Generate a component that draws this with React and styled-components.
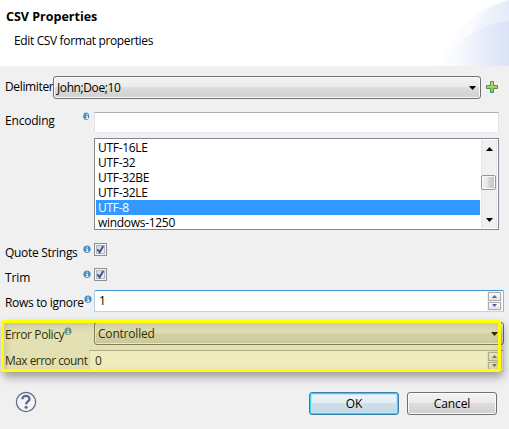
import React from "react";
import styled, { createGlobalStyle, css } from "styled-components";

const Global = createGlobalStyle`
  * { box-sizing: border-box; }
  body { margin: 0; background: #f0f0f0; overflow: hidden; }
`;

const Dialog = styled.main`
  position: relative;
  display: flex;
  flex-direction: column;
  width: 509px;
  height: 429px;
  overflow: hidden;
  background: #f0f0f0;
  color: #000;
  font: 12px/16px "Open Sans", "Noto Sans", sans-serif;
`;

const Header = styled.header`
  display: flex;
  justify-content: space-between;
  height: 66px;
  background: #fff;
`;
const Headings = styled.div`
  padding: 9px 0 0 6px;
`;
const Title = styled.h1`
  margin: 0;
  font-size: 12.5px;
  line-height: 16px;
  font-weight: 700;
  white-space: nowrap;
  letter-spacing: ${(p) => p.$ls || 0}px;
`;
const Subtitle = styled.p`
  margin: 8px 0 0 8px;
  white-space: nowrap;
  letter-spacing: ${(p) => p.$ls || 0}px;
`;
const Text = styled.span`
  display: block;
  white-space: nowrap;
  letter-spacing: ${(p) => p.$ls || 0}px;
`;

const Form = styled.form`
  display: flex;
  flex-direction: column;
`;
const Row = styled.div`
  display: flex;
  align-items: flex-start;
  height: ${(p) => p.$h}px;
  margin-top: ${(p) => p.$gap || 0}px;
  padding-left: 5px;
`;
const Label = styled.label`
  display: flex;
  flex: none;
  justify-content: ${(p) => (p.$tight ? "flex-start" : "space-between")};
  width: ${(p) => p.$w || 89}px;
  padding-right: ${(p) => (p.$tight ? 0 : 3)}px;
  padding-top: ${(p) => p.$top || 0}px;
`;
const InfoSvg = styled.svg`
  flex: none;
  display: block;
  width: 8px;
  height: 9px;
  margin-top: ${(p) => p.$top || 0}px;
`;

const Combo = styled.div`
  display: flex;
  align-items: center;
  justify-content: space-between;
  width: ${(p) => p.$w}px;
  height: 23px;
  padding: 0 ${(p) => p.$pr || 4}px 0 3px;
  border: 1px solid #707070;
  border-radius: 3px;
  box-shadow: inset 0 0 0 1px #fafafa;
  background: linear-gradient(#f2f2f2 0%, #ebebeb 48%, #dddddd 50%, #cfcfcf 100%);
`;
const AddButton = styled.button`
  display: flex;
  margin: 5px 0 0 5px;
  padding: 0;
  border: 0;
  background: none;
`;

const Field = styled.div`
  display: flex;
  justify-content: space-between;
  width: ${(p) => p.$w}px;
  height: ${(p) => p.$h || 22}px;
  padding-left: ${(p) => p.$pl || 4}px;
  line-height: 20px;
  background: #fff;
  border: 1px solid #e2e3ea;
  border-top-color: #abadb3;
  border-right-color: #dbdfe6;
  border-bottom-color: #e3e9ef;
  ${(p) =>
    p.$focus &&
    css`
      border-color: #3d94d0 #abadb3 #b7d9ed #b5cfe7;
      border-radius: 2px 0 0 0;
    `}
`;
const Spinner = styled.div`
  display: flex;
  flex-direction: column;
  gap: 1px;
  width: 16px;
  height: 20px;
  padding: 1px;
  background: #f0f0f0;
  border-right: 1px solid #fff;
`;
const SpinButton = styled.div`
  display: flex;
  flex: 1;
  align-items: center;
  justify-content: center;
  border: 1px solid #abadb3;
  background: linear-gradient(#fafafa, #e4e4e4);
`;

const ListBox = styled.div`
  display: flex;
  width: 405px;
  height: 92px;
  margin: 5px 0 0 94px;
  padding: 1px;
  overflow: hidden;
  border: 1px solid #828790;
  background: #fff;
`;
const Options = styled.div`
  flex: 1;
  height: 90px;
`;
const Option = styled.div`
  height: 15px;
  padding-left: 2px;
  line-height: 15px;
  color: ${(p) => (p.$selected ? "#fff" : "#000")};
  background: ${(p) => (p.$selected ? "#3399ff" : "transparent")};
`;
const ScrollTrack = styled.div`
  display: flex;
  flex-direction: column;
  align-items: center;
  width: 16px;
  height: 88px;
  margin: 0 0 0 1px;
  padding: 7px 0 6px;
  border-left: 1px solid #e3e7ec;
  border-right: 1px solid #e3e7ec;
  background: #f0f0f0;
`;
const Thumb = styled.div`
  width: 15px;
  height: 15px;
  margin: 24px 0 auto -1px;
  border: 1px solid #979797;
  border-radius: 2px;
  box-shadow: inset 0 0 0 1px #f8f8f8;
  background: linear-gradient(90deg, #f4f4f4 0%, #e6e6e6 48%, #d3d3d6 52%, #c4c4c8 100%);
`;

const Checkbox = styled.div`
  display: flex;
  width: 13px;
  height: 13px;
  border: 1px solid #8e8f8f;
  box-shadow: inset 0 0 0 1px #f4f4f4, inset 0 0 0 2px #b4b9c0;
  background: linear-gradient(135deg, #cbcfd5, #f6f6f6);
`;

const Highlight = styled.div`
  position: absolute;
  left: 1px;
  top: 320px;
  width: 500px;
  height: 52px;
  border: 3px solid #ffff00;
  border-radius: 3px;
  background: rgba(187, 180, 0, 0.25);
  box-shadow: 2px 5px 10px rgba(0, 0, 0, 0.36), inset 2px 3px 7px rgba(0, 0, 0, 0.13);
`;

const Footer = styled.footer`
  display: flex;
  margin-top: 19px;
  padding-left: 15px;
`;
const Buttons = styled.div`
  display: flex;
  gap: 8px;
  margin: 1px 0 0 272px;
`;
const Button = styled.button`
  width: 90px;
  height: 23px;
  padding: 0;
  border: 1px solid ${(p) => (p.$primary ? "#3c7fb1" : "#707070")};
  border-radius: 3px;
  color: #000;
  font: inherit;
  line-height: 20px;
  box-shadow: ${(p) =>
    p.$primary ? "inset 0 0 0 1px #38cdf6, inset 0 0 0 2px #b9e8f6" : "inset 0 0 0 1px #fafafa"};
  background: ${(p) =>
    p.$primary
      ? "linear-gradient(#f0f4f6 0%, #e4edf2 48%, #cedfe8 50%, #c3d7e2 100%)"
      : "linear-gradient(#f2f2f2 0%, #ebebeb 48%, #dddddd 50%, #cfcfcf 100%)"};
`;

const Info = ({ top, clipped }) => (
  <InfoSvg $top={top} viewBox="0 0 8 9">
    <ellipse cx={clipped ? 3.2 : 4} cy="4.3" rx={clipped ? 3 : 3.6} ry="3.8" fill="#4b8fc0" />
    <path d="M4 1.6v1.2M3 4h1.4v2.5M2.7 6.6h2.8" stroke="#fff" fill="none" strokeWidth="1" />
  </InfoSvg>
);

const Arrow = ({ up, w = 7, h = 4, color = "#000" }) => (
  <svg width={w} height={h} viewBox="0 0 8 4" preserveAspectRatio="none">
    <path d={up ? "M0 4L4 0L8 4Z" : "M0 0H8L4 4Z"} fill={color} />
  </svg>
);

const Spin = () => (
  <Spinner>
    <SpinButton><Arrow up w={5} h={3} color="#4c5f9e" /></SpinButton>
    <SpinButton><Arrow w={5} h={3} color="#4c5f9e" /></SpinButton>
  </Spinner>
);

const Check = () => (
  <Checkbox>
    <svg width="11" height="11" viewBox="0 0 11 11">
      <path d="M2.4 5.2L4.6 8.2L8.3 2" stroke="#3f4f9b" strokeWidth="1.9" fill="none" />
    </svg>
  </Checkbox>
);

const Swoosh = () => (
  <svg width="120" height="66" viewBox="0 0 120 66">
    <defs>
      <linearGradient id="outer" gradientUnits="userSpaceOnUse" x1="48" x2="120" y1="0" y2="0">
        <stop offset="0" stopColor="#fff" />
        <stop offset=".5" stopColor="#f8fafe" />
        <stop offset="1" stopColor="#e8eefa" />
      </linearGradient>
      <linearGradient id="middle" gradientUnits="userSpaceOnUse" x1="70" x2="120" y1="0" y2="0">
        <stop offset="0" stopColor="#fafbfe" />
        <stop offset="1" stopColor="#e5ebf9" />
      </linearGradient>
      <linearGradient id="inner" gradientUnits="userSpaceOnUse" x1="48" x2="120" y1="0" y2="0">
        <stop offset="0" stopColor="#fff" />
        <stop offset=".35" stopColor="#f5f8fd" />
        <stop offset=".65" stopColor="#e7edfa" />
        <stop offset="1" stopColor="#dae2f7" />
      </linearGradient>
    </defs>
    <path d="M48 66C62 37 87 7 120 0V66Z" fill="url(#outer)" />
    <path d="M76 45C87 24 101 6 120 0V66H70Z" fill="url(#middle)" />
    <path d="M48 66C65 42 90 24 120 21V66Z" fill="url(#inner)" />
  </svg>
);

const Plus = () => (
  <svg width="12" height="12" viewBox="0 0 12 12">
    <defs>
      <linearGradient id="plus" x2="0" y2="1">
        <stop stopColor="#d9dd6a" />
        <stop offset="1" stopColor="#8cbf3f" />
      </linearGradient>
    </defs>
    <path d="M4.5 .5h3v4h4v3h-4v4h-3v-4h-4v-3h4Z" fill="url(#plus)" stroke="#3f9465" />
  </svg>
);

const Help = () => (
  <svg width="22" height="22" viewBox="0 0 22 22">
    <circle cx="11" cy="11" r="9.6" fill="#f4f5f8" stroke="#5a6886" strokeWidth="1.2" />
    <path d="M7.4 8.2C7.3 3.7 14.7 3.9 14.5 8.1C14.4 10.6 11.2 10.3 11.1 13.4" fill="none" stroke="#596a8e" strokeWidth="2.3" />
    <circle cx="11.1" cy="16.2" r="1.5" fill="#596a8e" />
  </svg>
);

const encodings = ["UTF-16LE", "UTF-32", "UTF-32BE", "UTF-32LE", "UTF-8", "windows-1250"];

export default function App() {
  return (
    <Dialog>
      <Global />
      <Header>
        <Headings>
          <Title $ls={0}>CSV Properties</Title>
          <Subtitle $ls={-0.36}>Edit CSV format properties</Subtitle>
        </Headings>
        <Swoosh />
      </Header>
      <Form>
        <Row $h={23} $gap={10}>
          <Label $tight $w={48} $top={3}><Text $ls={-0.35}>Delimiter</Text></Label>
          <Combo $w={428}><Text $ls={-0.4}>John;Doe;10</Text><Arrow /></Combo>
          <AddButton type="button" aria-label="Add delimiter"><Plus /></AddButton>
        </Row>
        <Row $h={21} $gap={13}>
          <Label $top={1}><Text $ls={-0.2}>Encoding</Text><Info clipped top={-1} /></Label>
          <Field $w={405} $h={21} />
        </Row>
        <ListBox>
          <Options>
            {encodings.map((name) => (
              <Option key={name} $selected={name === "UTF-8"}><Text $ls={-0.3}>{name}</Text></Option>
            ))}
          </Options>
          <ScrollTrack><Arrow up /><Thumb /><Arrow /></ScrollTrack>
        </ListBox>
        <Row $h={13} $gap={13}>
          <Label $top={2}><Text $ls={-0.3}>Quote Strings</Text><Info /></Label>
          <Check />
        </Row>
        <Row $h={13} $gap={12}>
          <Label $top={2}><Text $ls={-0.1}>Trim</Text><Info /></Label>
          <Check />
        </Row>
        <Row $h={22} $gap={9}>
          <Label $top={5}><Text $ls={-0.32}>Rows to ignore</Text><Info /></Label>
          <Field $w={410} $focus><Text>1</Text><Spin /></Field>
        </Row>
        <Row $h={23} $gap={10}>
          <Label $tight $top={5}><Text $ls={-0.4}>Error Policy</Text><Info top={0} /></Label>
          <Combo $w={410} $pr={5}><Text $ls={-0.2}>Controlled</Text><Arrow /></Combo>
        </Row>
        <Row $h={22} $gap={5}>
          <Label $tight $w={84} $top={3}><Text $ls={-0.55}>Max error count</Text></Label>
          <Field $w={415} $pl={5}><Text>0</Text><Spin /></Field>
        </Row>
      </Form>
      <Footer>
        <Help />
        <Buttons>
          <Button $primary>OK</Button>
          <Button><Text $ls={-0.1}>Cancel</Text></Button>
        </Buttons>
      </Footer>
      <Highlight />
    </Dialog>
  );
}
